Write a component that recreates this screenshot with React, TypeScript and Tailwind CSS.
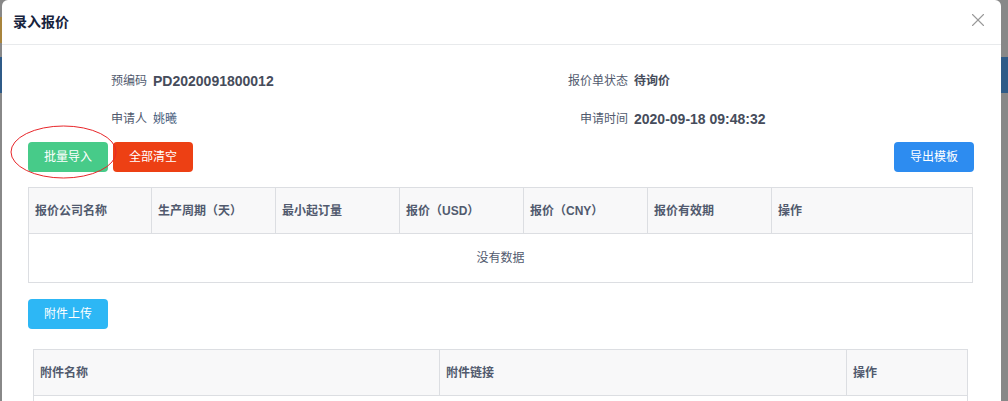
import { X } from 'lucide-react'

const font = { fontFamily: '"Liberation Sans", "Noto Sans CJK SC", sans-serif' }

const quoteCols = ['报价公司名称', '生产周期（天）', '最小起订量', '报价（USD）', '报价（CNY）', '报价有效期', '操作']
const fileCols = ['附件名称', '附件链接', '操作']

export default function App() {
    return (
        <div className="flex h-[401px] w-[1008px] overflow-hidden bg-[#888888]" style={font}>
            {/* page behind the modal, left edge */}
            <div className="flex w-[2px] shrink-0 flex-col">
                <div className="h-[17px]" />
                <div className="h-[26px] bg-[#a8843c]" />
                <div className="h-[14px]" />
                <div className="h-[36px] bg-[#2f5b88]" />
            </div>

            <div className="relative flex-1 rounded-t-[6px] bg-white">
                {/* header */}
                <div className="flex h-[45px] items-center justify-between border-b border-[#e8eaec] pl-[11px] pr-[12px]">
                    <span className="text-[14px] font-bold leading-none text-[#17233d]">录入报价</span>
                    <X className="-mt-[5px] h-[22px] w-[22px] text-[#999999]" strokeWidth={1.2} />
                </div>

                <div className="pl-[26px] pr-[28px] pt-[17px] text-[12px] text-[#515a6e]">
                    {/* info rows */}
                    <div className="flex h-[38px] items-center">
                        <div className="flex w-[472px] items-center">
                            <span className="w-[119px] text-right">预编码</span>
                            <span className="ml-[6px] text-[14px] font-bold text-[#464c5b]">PD2020091800012</span>
                        </div>
                        <div className="flex items-center">
                            <span className="w-[128px] text-right">报价单状态</span>
                            <span className="ml-[6px] font-bold text-[#464c5b]">待询价</span>
                        </div>
                    </div>
                    <div className="flex h-[38px] items-center">
                        <div className="flex w-[472px] items-center">
                            <span className="w-[119px] text-right">申请人</span>
                            <span className="ml-[6px] text-[#3f5878]">姚曦</span>
                        </div>
                        <div className="flex items-center">
                            <span className="w-[128px] text-right">申请时间</span>
                            <span className="ml-[6px] text-[14px] font-bold text-[#464c5b]">2020-09-18 09:48:32</span>
                        </div>
                    </div>

                    {/* actions */}
                    <div className="mt-[4px] flex h-[30px] justify-between">
                        <div className="flex gap-[5px]">
                            <button className="h-[30px] w-[80px] rounded-[4px] bg-[#47cb89] text-white">批量导入</button>
                            <button className="h-[30px] w-[80px] rounded-[4px] bg-[#ed4014] text-white">全部清空</button>
                        </div>
                        <button className="mr-[-1px] h-[30px] w-[80px] rounded-[4px] bg-[#2d8cf0] text-white">导出模板</button>
                    </div>

                    {/* quote table */}
                    <div className="mt-[15px] border border-[#dcdee2]">
                        <div className="grid h-[46px] grid-cols-[123px_124px_124px_124px_124px_124px_1fr] border-b border-[#dcdee2] bg-[#f8f8f9] font-bold">
                            {quoteCols.map((c, i) => (
                                <div
                                    key={c}
                                    className={`flex items-center pl-[6px] ${i < quoteCols.length - 1 ? 'border-r border-[#dcdee2]' : ''}`}
                                >
                                    {c}
                                </div>
                            ))}
                        </div>
                        <div className="flex h-[48px] items-center justify-center">没有数据</div>
                    </div>

                    <button className="mt-[16px] h-[30px] w-[80px] rounded-[4px] bg-[#2db7f5] text-white">附件上传</button>

                    {/* attachment table */}
                    <div className="mx-[5px] mt-[20px] border border-[#dcdee2]">
                        <div className="grid h-[46px] grid-cols-[406px_407px_1fr] border-b border-[#dcdee2] bg-[#f8f8f9] font-bold">
                            {fileCols.map((c, i) => (
                                <div
                                    key={c}
                                    className={`flex items-center pl-[6px] ${i < fileCols.length - 1 ? 'border-r border-[#dcdee2]' : ''}`}
                                >
                                    {c}
                                </div>
                            ))}
                        </div>
                        <div className="h-[48px]" />
                    </div>
                </div>

                {/* annotation circle */}
                <svg className="absolute left-[8px] top-[125px]" width="107" height="54" viewBox="0 0 107 54">
                    <ellipse cx="53.5" cy="27" rx="52.5" ry="26" fill="none" stroke="#e8262a" strokeWidth="1" />
                </svg>
            </div>

            {/* page behind the modal, right edge */}
            <div className="flex w-[7px] shrink-0 flex-col">
                <div className="h-[57px]" />
                <div className="h-[36px] bg-[#2f5b88]" />
            </div>
        </div>
    )
}
